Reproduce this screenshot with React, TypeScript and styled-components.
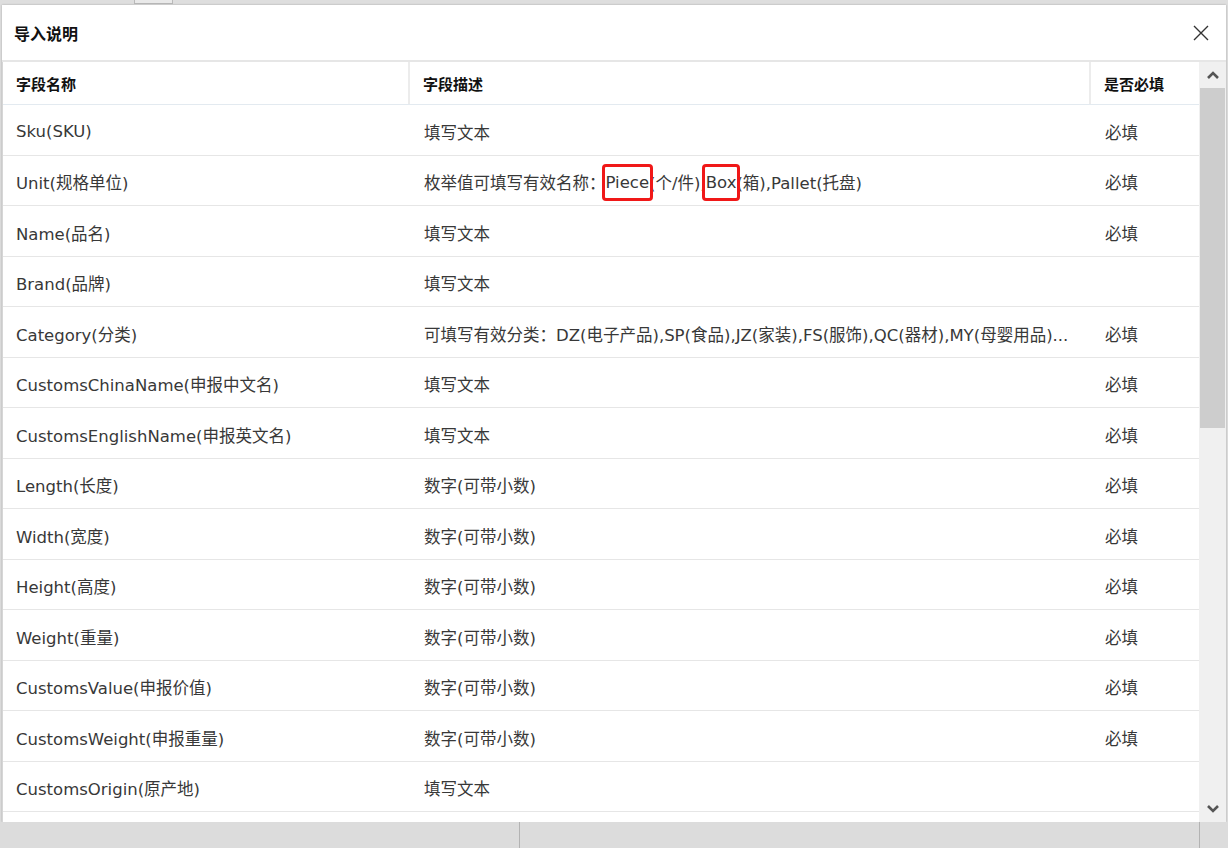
import React from "react";
import styled, { createGlobalStyle } from "styled-components";

const GlobalStyle = createGlobalStyle`
  html, body {
    margin: 0;
    padding: 0;
    background: #dedede;
    font-family: "DejaVu Sans", "Noto Sans CJK SC", sans-serif;
  }
`;

const Page = styled.div`
  width: 1228px;
  height: 848px;
  display: flex;
  flex-direction: column;
  overflow: hidden;
  background: #dedede;
`;

const TopStrip = styled.div`
  height: 5px;
  display: flex;
  padding-left: 134px;
`;

const TopTab = styled.div`
  width: 39px;
  height: 4px;
  border: 1px solid #b9b9b9;
  border-top: none;
  background: #e9e9e9;
  box-sizing: border-box;
`;

const Modal = styled.div`
  margin: 0 2px;
  height: 817px;
  background: #fff;
  display: flex;
  flex-direction: column;
  box-shadow: 0 0 2px rgba(0, 0, 0, 0.25);
`;

const Header = styled.div`
  height: 55px;
  flex-shrink: 0;
  display: flex;
  align-items: center;
  justify-content: space-between;
  padding: 0 16px 0 12px;
  border-bottom: 2px solid #e6e6e6;
`;

const Title = styled.h2`
  margin: 0;
  font-family: "Noto Sans CJK SC", sans-serif;
  font-size: 16px;
  font-weight: 700;
  color: #111;
`;

const CloseButton = styled.button`
  border: none;
  background: none;
  padding: 0;
  width: 18px;
  height: 18px;
  display: flex;
  align-items: center;
  justify-content: center;
  cursor: pointer;
`;

const Body = styled.div`
  flex: 1;
  display: flex;
  overflow: hidden;
`;

const Table = styled.div`
  flex: 1;
  overflow: hidden;
  border-left: 1px solid #d6d6d6;
`;

const Row = styled.div<{ $head?: boolean }>`
  display: grid;
  grid-template-columns: 407px 681px 1fr;
  height: ${(p) => (p.$head ? "43px" : "50.5px")};
  box-sizing: border-box;
  border-bottom: 1px solid ${(p) => (p.$head ? "#e3eaf0" : "#e6e6e6")};
`;

const HeadCell = styled.div<{ $divider?: boolean }>`
  display: flex;
  align-items: center;
  padding-left: 13px;
  font-family: "Noto Sans CJK SC", sans-serif;
  font-size: 15px;
  font-weight: 700;
  color: #111;
  border-right: ${(p) => (p.$divider ? "2px solid #ececec" : "none")};
`;

const Cell = styled.div<{ $first?: boolean }>`
  display: flex;
  align-items: center;
  padding: 4px 0 0 ${(p) => (p.$first ? "13px" : "14px")};
  font-size: 16.5px;
  color: #383838;
  white-space: nowrap;
  overflow: hidden;
`;

const Mark = styled.span`
  position: relative;

  &::after {
    content: "";
    position: absolute;
    left: -4px;
    right: -4px;
    top: -9px;
    bottom: -9px;
    border: 3px solid #f01818;
    border-radius: 4px;
  }
`;

const ScrollBar = styled.div`
  width: 27px;
  flex-shrink: 0;
  display: flex;
  flex-direction: column;
  background: #f0f0f0;
`;

const ScrollArrow = styled.div`
  height: 26px;
  display: flex;
  align-items: center;
  justify-content: center;
`;

const ScrollThumb = styled.div`
  height: 340px;
  margin: 0 1px 0 1px;
  background: #cdcdcd;
`;

const ScrollTrack = styled.div`
  flex: 1;
`;

const BottomStrip = styled.div`
  flex: 1;
  display: grid;
  grid-template-columns: 520px 680px 1fr;
`;

const BottomPane = styled.div<{ $line?: boolean }>`
  border-right: ${(p) => (p.$line ? "1px solid #b3b3b3" : "none")};
  background: #dcdcdc;
`;

const Chevron = ({ up }: { up?: boolean }) => (
  <svg width="14" height="10" viewBox="0 0 14 10">
    <path
      d={up ? "M2 8 L7 3 L12 8" : "M2 2 L7 7 L12 2"}
      fill="none"
      stroke="#555"
      strokeWidth="2.6"
    />
  </svg>
);

type Field = { name: string; desc: React.ReactNode; required: boolean };

const fields: Field[] = [
  { name: "Sku(SKU)", desc: "填写文本", required: true },
  {
    name: "Unit(规格单位)",
    desc: (
      <>
        枚举值可填写有效名称：<Mark>Piece</Mark>(个/件),<Mark>Box</Mark>(箱),Pallet(托盘)
      </>
    ),
    required: true,
  },
  { name: "Name(品名)", desc: "填写文本", required: true },
  { name: "Brand(品牌)", desc: "填写文本", required: false },
  {
    name: "Category(分类)",
    desc: "可填写有效分类：DZ(电子产品),SP(食品),JZ(家装),FS(服饰),QC(器材),MY(母婴用品)...",
    required: true,
  },
  { name: "CustomsChinaName(申报中文名)", desc: "填写文本", required: true },
  { name: "CustomsEnglishName(申报英文名)", desc: "填写文本", required: true },
  { name: "Length(长度)", desc: "数字(可带小数)", required: true },
  { name: "Width(宽度)", desc: "数字(可带小数)", required: true },
  { name: "Height(高度)", desc: "数字(可带小数)", required: true },
  { name: "Weight(重量)", desc: "数字(可带小数)", required: true },
  { name: "CustomsValue(申报价值)", desc: "数字(可带小数)", required: true },
  { name: "CustomsWeight(申报重量)", desc: "数字(可带小数)", required: true },
  { name: "CustomsOrigin(原产地)", desc: "填写文本", required: false },
];

export default function App() {
  return (
    <>
      <GlobalStyle />
      <Page>
        <TopStrip>
          <TopTab />
        </TopStrip>
        <Modal>
          <Header>
            <Title>导入说明</Title>
            <CloseButton aria-label="关闭">
              <svg width="16" height="16" viewBox="0 0 16 16">
                <path d="M1 1 L15 15 M15 1 L1 15" stroke="#333" strokeWidth="1.4" />
              </svg>
            </CloseButton>
          </Header>
          <Body>
            <Table>
              <Row $head>
                <HeadCell $divider>字段名称</HeadCell>
                <HeadCell $divider>字段描述</HeadCell>
                <HeadCell>是否必填</HeadCell>
              </Row>
              {fields.map((f) => (
                <Row key={f.name}>
                  <Cell $first>{f.name}</Cell>
                  <Cell>{f.desc}</Cell>
                  <Cell>{f.required ? "必填" : ""}</Cell>
                </Row>
              ))}
              <Row />
            </Table>
            <ScrollBar>
              <ScrollArrow>
                <Chevron up />
              </ScrollArrow>
              <ScrollThumb />
              <ScrollTrack />
              <ScrollArrow>
                <Chevron />
              </ScrollArrow>
            </ScrollBar>
          </Body>
        </Modal>
        <BottomStrip>
          <BottomPane $line />
          <BottomPane $line />
          <BottomPane />
        </BottomStrip>
      </Page>
    </>
  );
}
